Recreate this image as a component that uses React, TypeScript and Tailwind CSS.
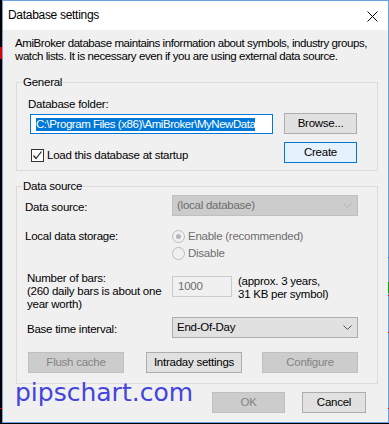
import React from "react";

function Chevron({ color }: { color: string }) {
  return (
    <svg width="9" height="5" viewBox="0 0 9 5" className="block">
      <path d="M0.5 0.5 L4.5 4.5 L8.5 0.5" fill="none" stroke={color} strokeWidth="1" />
    </svg>
  );
}

function Btn({
  w,
  children,
  kind,
}: {
  w: string;
  children: React.ReactNode;
  kind: "normal" | "disabled" | "default";
}) {
  const cls =
    kind === "disabled"
      ? "bg-[#cccccc] border-[#bfbfbf] text-[#838383]"
      : kind === "default"
      ? "bg-[#e5f1fb] border-[#0078d7] text-black"
      : "bg-[#e1e1e1] border-[#adadad] text-black";
  return (
    <div className={`${w} h-[21px] border ${cls} flex items-center justify-center shrink-0 whitespace-nowrap`}>
      {children}
    </div>
  );
}

export default function App() {
  return (
    <div className="relative w-[389px] h-[424px] bg-black overflow-hidden font-['Liberation_Sans',Arial,sans-serif] text-[11.5px] tracking-[-0.25px] leading-[13px] text-black">
      {/* background chart fragments */}
      <div className="absolute left-0 top-[47px] w-[2px] h-[12px] bg-[#e00000]" />
      <div className="absolute left-0 top-[408px] w-[2px] h-[1px] bg-[#e00000]" />
      <div className="absolute left-[388px] top-[257px] w-[1px] h-[1px] bg-[#4060ff]" />
      <div className="absolute left-[388px] top-[282px] w-[1px] h-[11px] bg-[#00a000]" />
      <div className="absolute left-[388px] top-[295px] w-[1px] h-[1px] bg-[#e00000]" />
      <div className="absolute left-[388px] top-[332px] w-[1px] h-[1px] bg-[#e00000]" />
      <div className="absolute left-[388px] top-[408px] w-[1px] h-[1px] bg-[#e00000]" />

      <div className="ml-[2px] w-[387px] h-[423px] border border-[#6aa3dd] flex flex-col bg-[#f0f0f0]">
        {/* title bar */}
        <div className="h-[29px] bg-white flex items-center pl-[5px] shrink-0">
          <span className="text-[12px] tracking-[-0.3px]">Database settings</span>
          <svg width="11" height="11" viewBox="0 0 11 11" className="ml-auto mr-[10px] mt-[1px]">
            <path d="M0.5 0.5 L10.5 10.5 M10.5 0.5 L0.5 10.5" stroke="#000" strokeWidth="1" fill="none" />
          </svg>
        </div>

        {/* body */}
        <div className="flex-1 flex flex-col">
          <div className="ml-[12px] mt-[7px] whitespace-nowrap tracking-[-0.42px]">
            <div>AmiBroker database maintains information about symbols, industry groups,</div>
            <div>watch lists. It is necessary even if you are using external data source.</div>
          </div>

          {/* General */}
          <fieldset className="ml-[13px] mt-[13px] w-[362px] border border-[#dcdcdc] p-0 m-0">
            <legend className="ml-[5px] px-[1px]">General</legend>
            <div className="pl-[11px] pt-[9px] pb-[7px]">
              <div>Database folder:</div>
              <div className="flex items-start mt-[2px]">
                <div className="mt-[1px] ml-[2px] w-[243px] h-[20px] border border-[#0078d7] bg-white flex items-center pl-[5px]">
                  <span className="bg-[#0078d7] text-white leading-[13px] whitespace-nowrap tracking-[-0.45px]">
                    C:\Program Files (x86)\AmiBroker\MyNewData
                  </span>
                </div>
                <div className="ml-[11px]">
                  <Btn w="w-[73px]" kind="normal">
                    Browse...
                  </Btn>
                </div>
              </div>
              <div className="flex items-start mt-[8px]">
                <div className="w-[256px] flex items-start">
                  <div className="ml-[3px] mt-[7px] w-[13px] h-[13px] border border-[#333333] bg-white flex items-center justify-center">
                    <svg width="11" height="11" viewBox="0 0 11 11">
                      <path d="M1.5 5.5 L4 8.5 L9.5 1.5" stroke="#222" strokeWidth="1.2" fill="none" />
                    </svg>
                  </div>
                  <span className="ml-[3px] mt-[7px]">Load this database at startup</span>
                </div>
                <Btn w="w-[73px]" kind="default">
                  Create
                </Btn>
              </div>
            </div>
          </fieldset>

          {/* Data source */}
          <fieldset className="ml-[13px] mt-[9px] w-[362px] border border-[#dcdcdc] p-0 m-0">
            <legend className="ml-[5px] px-[1px]">Data source</legend>
            <div className="pl-[8px] pt-[2px] pb-[10px]">
              <div className="flex items-start">
                <div className="w-[147px] mt-[6px]">Data source:</div>
                <div className="w-[186px] h-[21px] border border-[#bfbfbf] bg-[#cccccc] flex items-center pl-[4px] pr-[5px] text-[#6d6d6d]">
                  <span>(local database)</span>
                  <span className="ml-auto">
                    <Chevron color="#b0b0b0" />
                  </span>
                </div>
              </div>

              <div className="flex items-start mt-[12px]">
                <div className="w-[147px] h-[17px] flex items-center">Local data storage:</div>
                <div className="flex flex-col text-[#6d6d6d]">
                  <div className="h-[17px] flex items-center">
                    <div className="w-[13px] h-[13px] rounded-full border border-[#bcbcbc] bg-[#f0f0f0] flex items-center justify-center">
                      <div className="w-[5px] h-[5px] rounded-full bg-[#b4b4b4]" />
                    </div>
                    <span className="ml-[3px]">Enable (recommended)</span>
                  </div>
                  <div className="h-[17px] flex items-center">
                    <div className="w-[13px] h-[13px] rounded-full border border-[#bcbcbc] bg-[#f0f0f0]" />
                    <span className="ml-[3px]">Disable</span>
                  </div>
                </div>
              </div>

              <div className="flex items-start mt-[10px]">
                <div className="w-[147px] pl-[2px] whitespace-nowrap">
                  <div>Number of bars:</div>
                  <div>(260 daily bars is about one</div>
                  <div>year worth)</div>
                </div>
                <div className="mt-[4px] w-[60px] h-[21px] border border-[#cccccc] bg-[#f0f0f0] flex items-center pl-[5px] text-[#6d6d6d]">
                  1000
                </div>
                <div className="ml-[6px] mt-[3px] whitespace-nowrap">
                  <div>(approx. 3 years,</div>
                  <div>31 KB per symbol)</div>
                </div>
              </div>

              <div className="flex items-start mt-[6px]">
                <div className="w-[147px] pl-[2px] mt-[6px]">Base time interval:</div>
                <div className="w-[186px] h-[21px] border border-[#adadad] bg-[#e1e1e1] flex items-center pl-[4px] pr-[5px]">
                  <span>End-Of-Day</span>
                  <span className="ml-auto">
                    <Chevron color="#555555" />
                  </span>
                </div>
              </div>

              <div className="flex items-start mt-[14px] ml-[3px]">
                <Btn w="w-[96px]" kind="disabled">
                  Flush cache
                </Btn>
                <div className="ml-[22px]">
                  <Btn w="w-[96px]" kind="normal">
                    Intraday settings
                  </Btn>
                </div>
                <div className="ml-[20px]">
                  <Btn w="w-[96px]" kind="disabled">
                    Configure
                  </Btn>
                </div>
              </div>
            </div>
          </fieldset>

          <div className="flex mt-[8px] ml-[209px]">
            <Btn w="w-[73px]" kind="disabled">
              OK
            </Btn>
            <div className="ml-[17px]">
              <Btn w="w-[64px]" kind="normal">
                Cancel
              </Btn>
            </div>
          </div>
        </div>
      </div>

      {/* watermark */}
      <div className="absolute left-[15px] top-[378px] font-['DejaVu_Sans',sans-serif] text-[25px] tracking-[0px] leading-[30px] text-[#4444dd] whitespace-nowrap">
        pipschart.com
      </div>
    </div>
  );
}
